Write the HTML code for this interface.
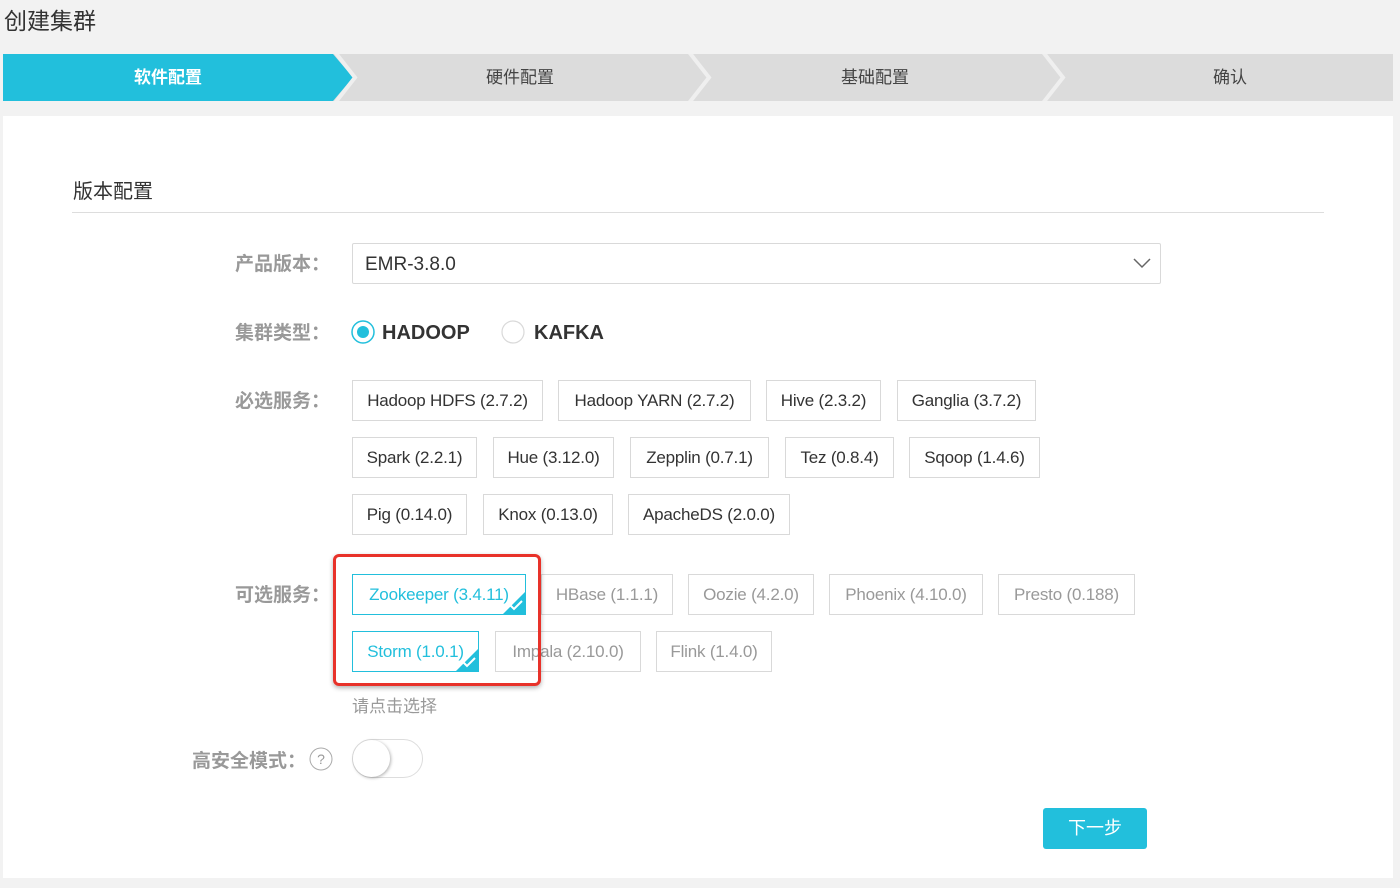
<!DOCTYPE html>
<html><head><meta charset="utf-8">
<style>
*{margin:0;padding:0;box-sizing:border-box}
body{width:1400px;height:888px;background:#f2f2f2;position:relative;overflow:hidden;font-family:"Liberation Sans","Noto Sans CJK SC",sans-serif}
.a{position:absolute}
.title{left:4px;top:2px;font-size:23px;color:#333}
.panel{left:3px;top:116px;width:1390px;height:762px;background:#fff}
.step{top:54px;height:47px;line-height:47px;font-size:17px;text-align:center;color:#444}
.lbl{font-size:19px;font-weight:bold;color:#999;text-align:right;width:220px;font-family:"Noto Sans CJK SC",sans-serif;line-height:24px}
.tag{height:41px;line-height:39px;border:1px solid #d9d9d9;font-size:17px;color:#333;text-align:center;background:#fff;letter-spacing:-0.2px}
.tag.g{color:#999}
.tag.s{border-color:#22bfdc;color:#22bfdc;overflow:hidden}
.tag.s:after{content:"";position:absolute;right:-1px;bottom:-1px;border-style:solid;border-width:0 0 24px 24px;border-color:transparent transparent #22bfdc transparent}
.chk{position:absolute;right:2px;bottom:3px;z-index:2}
</style></head><body>
<div class="a title">创建集群</div>
<svg class="a" style="left:3px;top:54px" width="1390" height="47">
<rect x="0" y="0" width="1390" height="47" fill="#dcdcdc"/>
<polygon points="0,0 330,0 350,23.5 330,47 0,47" fill="#22bfdc"/>
<polyline points="332,-2 352,23.5 332,49" fill="none" stroke="#efefef" stroke-width="4"/>
<polyline points="686,-2 706,23.5 686,49" fill="none" stroke="#efefef" stroke-width="4"/>
<polyline points="1040,-2 1060,23.5 1040,49" fill="none" stroke="#efefef" stroke-width="4"/>
</svg>
<div class="a step" style="left:3px;width:330px;color:#fff;font-weight:bold">软件配置</div>
<div class="a step" style="left:345px;width:350px">硬件配置</div>
<div class="a step" style="left:700px;width:350px">基础配置</div>
<div class="a step" style="left:1055px;width:350px">确认</div>
<div class="a panel"></div>
<div class="a" style="left:73px;top:175px;font-size:20px;color:#333">版本配置</div>
<div class="a" style="left:72px;top:212px;width:1252px;height:1px;background:#ddd"></div>

<div class="a lbl" style="left:110px;top:251px">产品版本：</div>
<div class="a" style="left:352px;top:243px;width:809px;height:41px;border:1px solid #d9d9d9;border-radius:2px;font-size:19px;line-height:41px;padding-left:12px;color:#333">EMR-3.8.0</div>
<svg class="a" style="left:1132px;top:256px" width="20" height="14"><polyline points="2,3 10,11 18,3" fill="none" stroke="#666" stroke-width="1.5"/></svg>

<div class="a lbl" style="left:110px;top:320px">集群类型：</div>
<svg class="a" style="left:351px;top:320px" width="26" height="26"><circle cx="12" cy="12" r="11" fill="#fff" stroke="#22bfdc" stroke-width="1.5"/><circle cx="12" cy="12" r="6" fill="#22bfdc"/></svg>
<div class="a" style="left:382px;top:322px;font-size:20px;font-weight:bold;color:#333">HADOOP</div>
<svg class="a" style="left:501px;top:320px" width="26" height="26"><circle cx="12" cy="12" r="11" fill="#fff" stroke="#d9d9d9" stroke-width="1.2"/></svg>
<div class="a" style="left:534px;top:322px;font-size:20px;font-weight:bold;color:#333">KAFKA</div>

<div class="a lbl" style="left:110px;top:388px">必选服务：</div>
<div class="a tag" style="left:352px;top:380px;width:191px">Hadoop HDFS (2.7.2)</div>
<div class="a tag" style="left:558px;top:380px;width:193px">Hadoop YARN (2.7.2)</div>
<div class="a tag" style="left:766px;top:380px;width:115px">Hive (2.3.2)</div>
<div class="a tag" style="left:897px;top:380px;width:139px">Ganglia (3.7.2)</div>
<div class="a tag" style="left:352px;top:437px;width:125px">Spark (2.2.1)</div>
<div class="a tag" style="left:493px;top:437px;width:121px">Hue (3.12.0)</div>
<div class="a tag" style="left:630px;top:437px;width:139px">Zepplin (0.7.1)</div>
<div class="a tag" style="left:785px;top:437px;width:109px">Tez (0.8.4)</div>
<div class="a tag" style="left:909px;top:437px;width:131px">Sqoop (1.4.6)</div>
<div class="a tag" style="left:352px;top:494px;width:115px">Pig (0.14.0)</div>
<div class="a tag" style="left:483px;top:494px;width:130px">Knox (0.13.0)</div>
<div class="a tag" style="left:628px;top:494px;width:162px">ApacheDS (2.0.0)</div>

<div class="a lbl" style="left:110px;top:582px">可选服务：</div>
<div class="a tag s" style="left:352px;top:574px;width:174px">Zookeeper (3.4.11)<svg class="chk" width="14" height="11"><polyline points="1,5 5,9 13,1" fill="none" stroke="#fff" stroke-width="2"/></svg></div>
<div class="a tag g" style="left:541px;top:574px;width:132px">HBase (1.1.1)</div>
<div class="a tag g" style="left:688px;top:574px;width:126px">Oozie (4.2.0)</div>
<div class="a tag g" style="left:829px;top:574px;width:154px">Phoenix (4.10.0)</div>
<div class="a tag g" style="left:998px;top:574px;width:137px">Presto (0.188)</div>
<div class="a tag s" style="left:352px;top:631px;width:127px">Storm (1.0.1)<svg class="chk" width="14" height="11"><polyline points="1,5 5,9 13,1" fill="none" stroke="#fff" stroke-width="2"/></svg></div>
<div class="a tag g" style="left:495px;top:631px;width:146px">Impala (2.10.0)</div>
<div class="a tag g" style="left:656px;top:631px;width:116px">Flink (1.4.0)</div>
<div class="a" style="left:333px;top:554px;width:208px;height:132px;border:3px solid #e8322a;border-radius:6px;box-shadow:0 2px 5px rgba(0,0,0,.3)"></div>
<div class="a" style="left:352px;top:692px;font-size:17px;color:#999">请点击选择</div>

<div class="a lbl" style="left:86px;top:748px">高安全模式：</div>
<svg class="a" style="left:309px;top:747px" width="26" height="26"><circle cx="12" cy="12" r="11" fill="none" stroke="#aaa" stroke-width="1"/><text x="12" y="17" font-size="14" text-anchor="middle" fill="#999" font-family="Liberation Sans">?</text></svg>
<div class="a" style="left:352px;top:739px;width:71px;height:39px;border:1px solid #ddd;border-radius:20px;background:#fff"></div>
<div class="a" style="left:353px;top:740px;width:37px;height:37px;border-radius:50%;background:#fff;box-shadow:1px 1px 3px rgba(0,0,0,.3)"></div>

<div class="a" style="left:1043px;top:808px;width:104px;height:41px;background:#22bfdc;border-radius:3px;color:#fff;font-size:18px;text-align:center;line-height:41px">下一步</div>
</body></html>
